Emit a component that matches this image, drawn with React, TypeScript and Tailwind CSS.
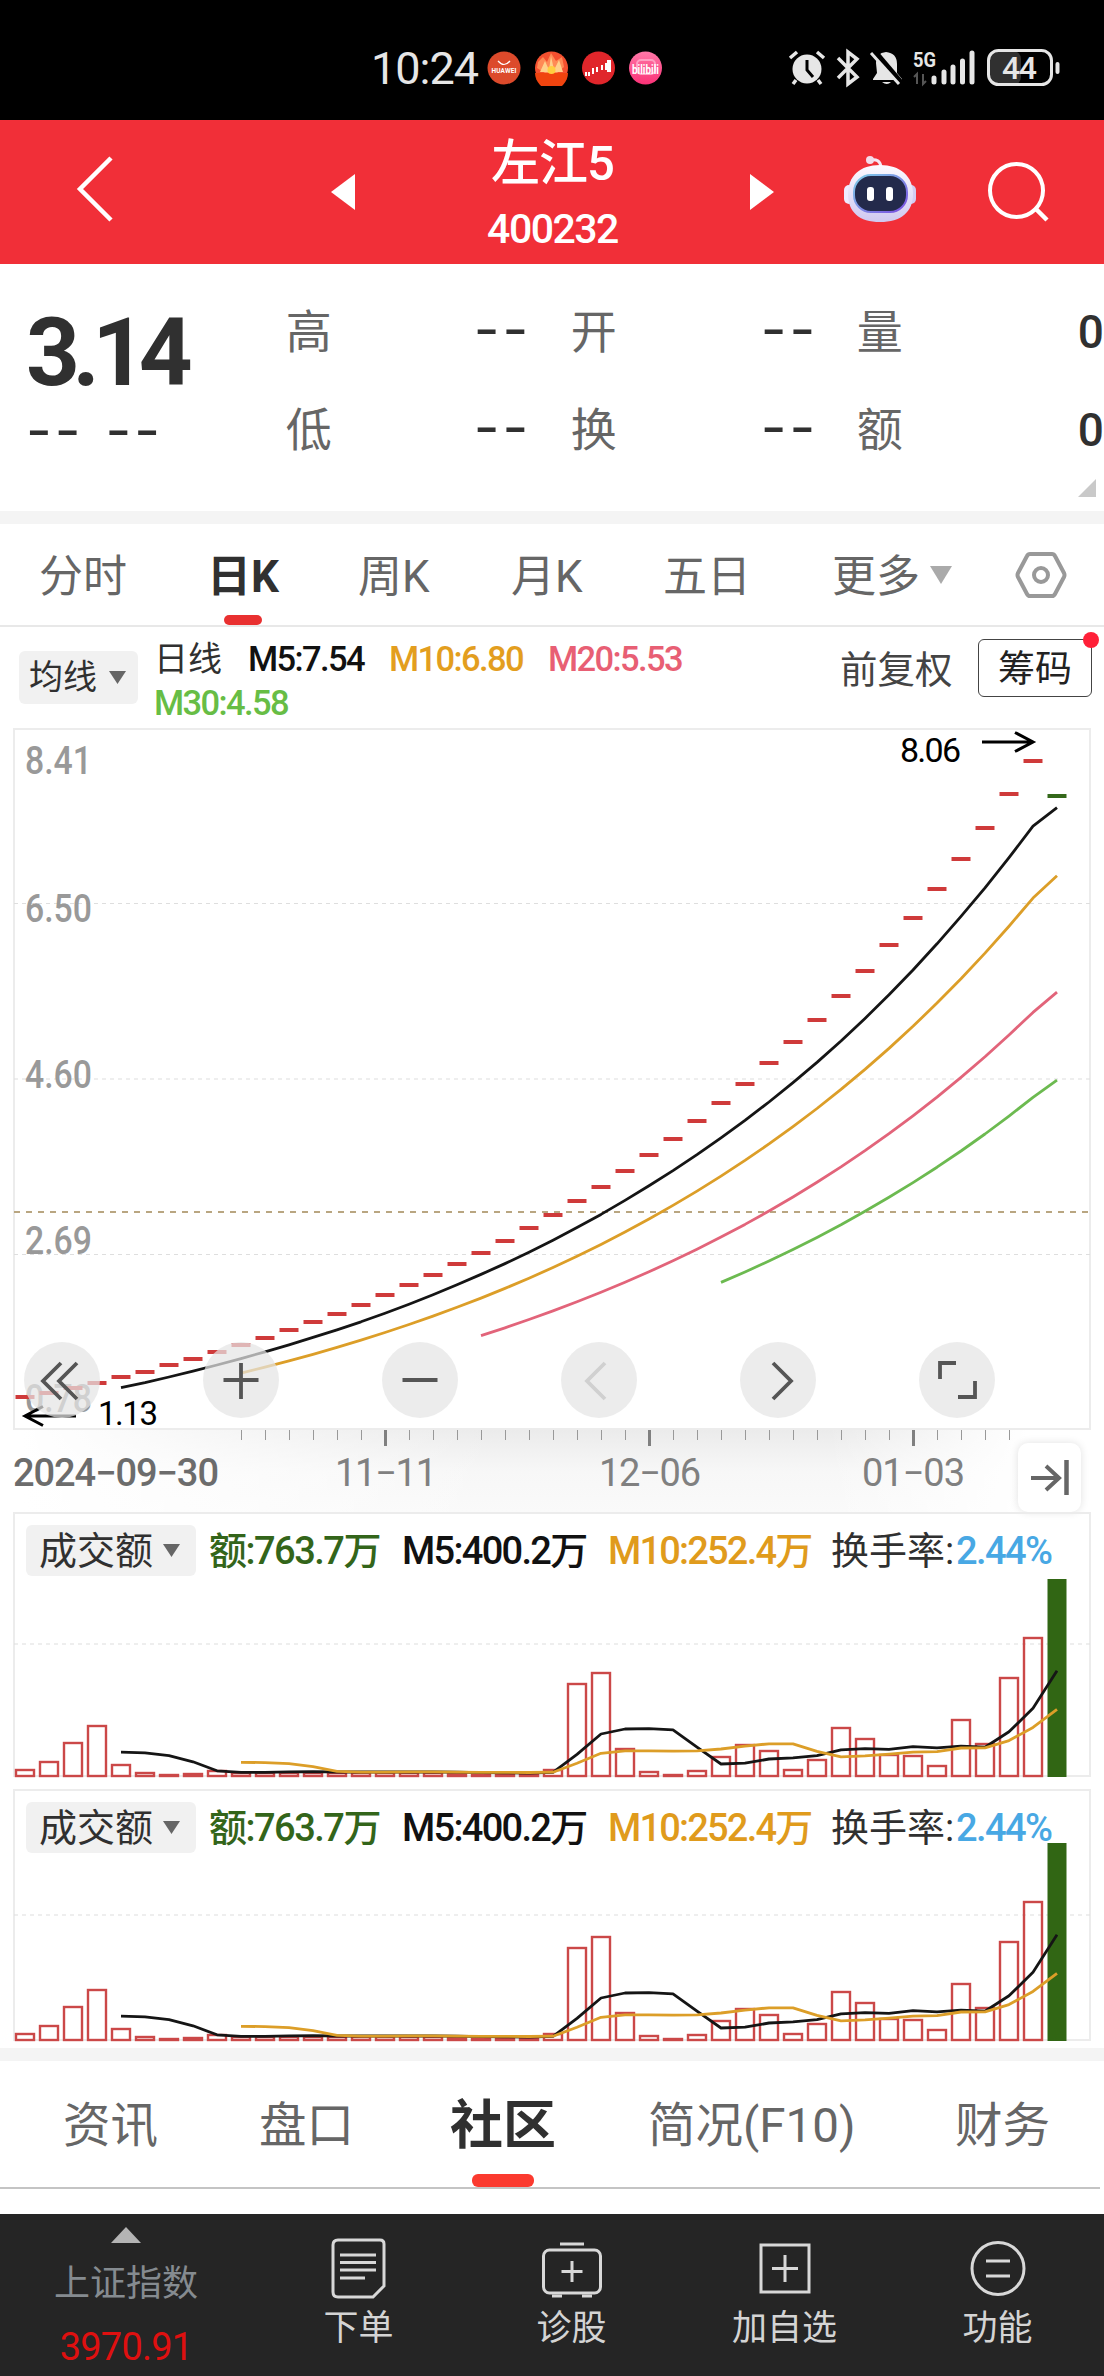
import React from "react";
import clsx from "clsx";

// price rows, one per trading day, as y positions inside the k-line panel
const closes = [
  1397, 1393, 1388, 1383, 1377, 1372, 1365, 1359, 1352, 1345, 1338, 1330, 1322, 1314, 1305,
  1295, 1285, 1275, 1264, 1253, 1241, 1228, 1215, 1201, 1187, 1171, 1155, 1139, 1121, 1103,
  1084, 1063, 1042, 1020, 996, 971, 945, 918, 889, 859, 828, 794, 761, 796,
];

const volumes = [
  7, 15, 34, 51, 12, 4, 1, 3, 6, 4, 4, 4, 4, 4, 4, 4, 4, 4, 3, 2, 3, 3, 7, 93, 104, 28, 5, 1, 6,
  20, 32, 26, 7, 17, 49, 38, 22, 21, 11, 57, 33, 99, 139, 198,
];

const xOf = (i: number) => 25 + i * 24;

const average = (data: number[], n: number, toY: (v: number) => number) =>
  data
    .map((_, i) => {
      if (i < n - 1) return "";
      const sum = data.slice(i - n + 1, i + 1).reduce((a, b) => a + b, 0);
      return `${xOf(i)},${toY(sum / n).toFixed(1)}`;
    })
    .filter(Boolean)
    .join(" ");

const same = (v: number) => v;

const StatusBar = () => (
  <div className="flex h-[120px] items-center bg-black pt-[16px] pl-[371px] text-[#e6e6e6]">
    <span className="w-[116px] text-[45px] leading-none tracking-[-1px]">10:24</span>
    <svg width="180" height="36" viewBox="487 50 180 36">
      <defs>
        <linearGradient id="pink" x1="0" y1="0" x2="0" y2="1">
          <stop offset="0" stopColor="#ff78a8" />
          <stop offset="1" stopColor="#fb3277" />
        </linearGradient>
      </defs>
      <circle cx="504" cy="68" r="16.5" fill="#dc4a2b" />
      <path d="M498 61q6 7 12 0" fill="none" stroke="#fff" strokeWidth="1.2" />
      <text x="491.500" y="72.5" fontSize="6.5" fontWeight="700" fill="#fff" textLength="25">HUAWEI</text>
      <circle cx="551.500" cy="68" r="16.500" fill="#f4502f" />
      <path d="M538 62l5-5 4 5 4-9 5 8 6-4 2 10-7 6h-12l-8-5z" fill="#ff8a55" />
      <path d="M540 72l5-11 4 9 2-14 3 14 5-10 4 12z" fill="#ffd08a" />
      <path d="M535 73h33a16.500 16.500 0 0 1-33 0z" fill="#f0440f" />
      <circle cx="551.500" cy="70" r="4" fill="#ffcf40" />
      <circle cx="598.500" cy="68" r="16.500" fill="#e0262b" />
      <path d="M586 72v4M589 72v4M593 68v6M597 67v5M602 65v5M606 63v7M610 61v10h-2v-10z" stroke="#fff" strokeWidth="2" fill="none" />
      <circle cx="645.500" cy="68" r="16.500" fill="url(#pink)" />
      <rect x="637" y="60" width="18" height="14" rx="4" fill="none" stroke="#ff9fc2" strokeWidth="2" />
      <text x="632" y="74" fontSize="13" fontWeight="700" fill="#fff" textLength="27" lengthAdjust="spacingAndGlyphs">bilibili</text>
    </svg>
    <svg className="ml-[113px]" width="290" height="44" viewBox="780 46 290 44" fill="none" stroke="#e6e6e6">
      <circle cx="807" cy="69" r="14.500" fill="#e6e6e6" stroke="none" />
      <path d="M790 58l7-6M824 58l-7-6M796 80l-3 4M818 80l3 4" strokeWidth="3.500" />
      <path d="M807 60v10l6 7" stroke="#000" strokeWidth="3" />
      <path d="M838 58l19 19-9 7V52l9 7-19 19" strokeWidth="3.500" />
      <path d="M876 63q0-10 10-11 11 1 11 12v9l5 6v1h-29v-1l4-6z" fill="#e6e6e6" stroke="none" />
      <path d="M882 82h9q-4 4-9 0z" fill="#e6e6e6" stroke="none" />
      <path d="M873 50l28 33" stroke="#000" strokeWidth="6" />
      <path d="M871 53l28 31" strokeWidth="3" />
      <text x="913" y="67" fontSize="21" fontWeight="700" fill="#e6e6e6" stroke="none" textLength="23" lengthAdjust="spacingAndGlyphs">5G</text>
      <path d="M917 84V74l-3 3M923 74v10l3-3" stroke="#555" strokeWidth="2" />
      <path d="M934 78v4M944 72v10M953 67v15M962.500 61v21M972 53v29" strokeWidth="5" strokeLinecap="round" />
      <rect x="989" y="51" width="32" height="34" rx="8" fill="#303030" stroke="none" />
      <rect x="988.500" y="50.500" width="63" height="34" rx="10" strokeWidth="3" />
      <path d="M1057.500 64v8" strokeWidth="4" strokeLinecap="round" />
      <text x="1002" y="79" fontSize="32" fontWeight="500" fill="#e6e6e6" stroke="none" textLength="35">44</text>
    </svg>
  </div>
);

const Robot = () => (
  <svg width="76" height="70" viewBox="842 154 76 70">
    <defs>
      <linearGradient id="shell" x1="0" y1="0" x2="0" y2="1">
        <stop offset="0" stopColor="#fdfaff" />
        <stop offset="1" stopColor="#cfc8f0" />
      </linearGradient>
      <linearGradient id="rim" x1="0" y1="0" x2="1" y2="1">
        <stop offset="0" stopColor="#7fd0e8" />
        <stop offset="1" stopColor="#7a4be0" />
      </linearGradient>
    </defs>
    <path d="M870 160q10-2 11 7" fill="none" stroke="#f6e6f4" strokeWidth="3" />
    <circle cx="870" cy="160" r="4" fill="#f3dcea" />
    <rect x="844" y="185" width="10" height="19" rx="5" fill="#efeaff" />
    <rect x="906" y="185" width="10" height="19" rx="5" fill="#d3cdf2" />
    <path d="M848 194c0-18 12-29 32-29s33 11 33 29-12 28-33 28-32-10-32-28z" fill="url(#shell)" />
    <rect x="854" y="175" width="53" height="37" rx="17" fill="#232a4b" stroke="url(#rim)" strokeWidth="2" />
    <rect x="867" y="187" width="7" height="14" rx="3" fill="#fff" />
    <rect x="886" y="187" width="7" height="14" rx="3" fill="#fff" />
  </svg>
);

const Header = () => (
  <header className="flex h-[144px] items-center bg-[#f12f38] text-white">
    <svg className="-mt-[6px] ml-[74px]" width="42" height="70" viewBox="0 0 42 70" fill="none" stroke="#fff" strokeWidth="4.500">
      <path d="M37 4L6 35l31 31" />
    </svg>
    <svg className="ml-[215px]" width="24" height="36" viewBox="0 0 24 36">
      <path d="M24 0v36L0 18z" fill="#fff" />
    </svg>
    <div className="flex w-[395px] flex-col items-center pt-[5px] font-medium">
      <h1 className="text-[49px] leading-[56px] tracking-[-1px]">左江5</h1>
      <span className="mt-[13px] text-[41px] leading-[48px] tracking-[-1.5px]">400232</span>
    </div>
    <svg width="24" height="36" viewBox="0 0 24 36">
      <path d="M0 0v36l24-18z" fill="#fff" />
    </svg>
    <div className="-mt-[6px] ml-[68px]">
      <Robot />
    </div>
    <svg className="ml-[68px]" width="64" height="64" viewBox="0 0 64 64" fill="none" stroke="#fff">
      <circle cx="30.500" cy="30.500" r="26.500" strokeWidth="4" />
      <path d="M50 49l11 11" strokeWidth="4.500" />
    </svg>
  </header>
);

const Dashes = ({ className }: { className?: string }) => (
  <span className={clsx("pb-[6px] font-[Inter] text-[56px] leading-[50px] tracking-[3px] text-[#303030]", className)}>--</span>
);

const quoteRows = [
  ["高", "开", "量"],
  ["低", "换", "额"],
];

const Quote = () => (
  <section className="relative flex h-[247px]">
    <div className="w-[288px] pl-[26px] pt-[42px] text-[#303030]">
      <div className="text-[94px] leading-[94px] font-bold tracking-[-7.500px]">3.14</div>
      <div className="flex h-[66px] items-center gap-[22px]">
        <Dashes />
        <Dashes />
      </div>
    </div>
    <div className="flex-1 pt-[19px]">
      {quoteRows.map((row) => (
        <div key={row[0]} className="flex h-[98px] items-center text-[46px] leading-none text-[#666]">
          <span className="w-[188px]">{row[0]}</span>
          <Dashes className="w-[97px]" />
          <span className="w-[190px]">{row[1]}</span>
          <Dashes className="w-[96px]" />
          <span className="w-[221px]">{row[2]}</span>
          <span className="font-medium text-[#303030]">0</span>
        </div>
      ))}
    </div>
    <svg className="absolute right-[8px] bottom-[14px]" width="18" height="18">
      <path d="M18 0v18H0z" fill="#c9c9c9" />
    </svg>
  </section>
);

const periods = [
  { label: "分时", width: "w-[168px]" },
  { label: "日K", width: "w-[151px]", active: true },
  { label: "周K", width: "w-[153px]" },
  { label: "月K", width: "w-[152px]" },
  { label: "五日", width: "w-[169px]" },
  { label: "更多", width: "w-[97px]" },
];

const PeriodTabs = () => (
  <nav className="flex h-[103px] items-center border-b-2 border-[#e8e8e8] pl-[39px] text-[44px] text-[#666]">
    {periods.map((p) => (
      <div key={p.label} className={clsx("relative flex h-full items-center pt-[5px] whitespace-nowrap", p.width, p.active && "font-bold text-[#303030]")}>
        {p.label}
        {p.active && <i className="absolute bottom-0 left-[17px] h-[10px] w-[38px] rounded-[5px] bg-[#e93030]" />}
      </div>
    ))}
    <svg width="24" height="18">
      <path d="M1 0h22L12 18z" fill="#aaa" />
    </svg>
    <svg className="ml-[62px]" width="52" height="50" viewBox="0 0 52 50" fill="none" stroke="#999" strokeWidth="4">
      <path d="M15 4h22q2 0 3 2l9 17q1 2 0 4l-9 17q-1 2-3 2H15q-2 0-3-2L3 27q-1-2 0-4l9-17q1-2 3-2z" />
      <circle cx="26" cy="25" r="7" />
    </svg>
  </nav>
);

const Caret = () => (
  <svg width="19" height="13">
    <path d="M1 0h17L9.500 13z" fill="#666" />
  </svg>
);

const AverageLegend = () => (
  <div className="flex h-[101px] whitespace-nowrap">
    <div className="mt-[24px] ml-[19px] flex h-[53px] w-[119px] items-center gap-[11px] rounded-[6px] bg-[#f1f1f1] pl-[10px] text-[34px] text-[#303030]">
      均线
      <Caret />
    </div>
    <div className="ml-[16px] w-[686px] pt-[10px] text-[34.500px] leading-[44px] font-medium tracking-[-1.6px]">
      <div className="flex">
        <span className="w-[94px] text-[34px] font-normal tracking-normal text-[#303030]">日线</span>
        <span className="w-[141px] text-[#111]">M5:7.54</span>
        <span className="w-[159px] text-[#e39e1e]">M10:6.80</span>
        <span className="text-[#e85f74]">M20:5.53</span>
      </div>
      <div className="text-[#67bd45]">M30:4.58</div>
    </div>
    <div className="mt-[20px] w-[138px] text-[37.500px] leading-[46px] text-[#444]">前复权</div>
    <div className="relative mt-[12px] flex h-[58px] w-[114px] items-center justify-center rounded-[6px] border border-[#444] pt-[3px] text-[37px] text-[#222]">
      筹码
      <i className="absolute -top-[8px] -right-[8px] size-[16px] rounded-full bg-[#ff2038]" />
    </div>
  </div>
);

const priceLabels: [string, number][] = [
  ["8.41", 774],
  ["6.50", 922],
  ["4.60", 1088],
  ["2.69", 1254],
  ["0.78", 1412],
];

const chartButtons = [
  { d: "M37 21L19 39l18 18M53 21L35 39l18 18", color: "#555" },
  { d: "M38 21v36M20.500 38h35", color: "#555" },
  { d: "M20.500 38h35", color: "#555" },
  { d: "M44 21L26 39l18 18", color: "#d0d0d0" },
  { d: "M33 21l18 18-18 18", color: "#555" },
  { d: "M21 37V21h16M56 39v16H39", color: "#555" },
];

const KLine = () => (
  <div className="relative h-[702px]">
    <svg className="block" width="1104" height="702" viewBox="0 728 1104 702" fill="none">
      <rect x="14" y="729" width="1076" height="700" stroke="#ececec" strokeWidth="2" />
      <path d="M14 903.500h1076M14 1079h1076M14 1254.500h1076" stroke="#dedede" strokeWidth="1.200" strokeDasharray="4 4" />
      <path d="M14 1212h1076" stroke="#b9a681" strokeWidth="2" strokeDasharray="6 6" />
      {priceLabels.map(([label, y]) => (
        <text key={label} x="25" y={y} fontSize="38" fontWeight="500" fill="#999" textLength="67" lengthAdjust="spacingAndGlyphs">
          {label}
        </text>
      ))}
      {closes.map((y, i) => (
        <path key={i} d={`M${xOf(i) - 9.500} ${y}h19`} stroke={i === 43 ? "#34681a" : "#cf3a3a"} strokeWidth="4" />
      ))}
      <g strokeWidth="2.800" strokeLinejoin="round">
        <polyline points={average(closes, 5, same)} stroke="#151515" />
        <polyline points={average(closes, 10, same)} stroke="#dc9e28" />
        <polyline points={average(closes, 20, same)} stroke="#e2647a" />
        <polyline points={average(closes, 30, same)} stroke="#6cba50" />
      </g>
      <g stroke="#000" strokeWidth="3">
        <path d="M982 742h50M1015 732.500l18 9.500-18 9.500" />
        <path d="M76 1416H26M43 1406.500l-18 9.500 18 9.500" />
      </g>
      <text x="900" y="761.500" fontSize="34" fill="#000" textLength="61">8.06</text>
      <text x="98" y="1425" fontSize="33" fill="#000" textLength="60">1.13</text>
    </svg>
    <div className="absolute bottom-[12px] left-[24px] flex gap-[103px]">
      {chartButtons.map((b, i) => (
        <button key={i} className="size-[76px] rounded-full bg-[#e5e5e5]/72">
          <svg width="76" height="76" fill="none" stroke={b.color} strokeWidth="3.800">
            <path d={b.d} />
          </svg>
        </button>
      ))}
    </div>
  </div>
);

const ticks = Array.from({ length: 33 }, (_, i) => i + 9);

const TimeAxis = () => (
  <div className="relative flex h-[82px] justify-between">
    <svg className="block" width="1104" height="82" viewBox="0 1430 1104 82">
      <defs>
        <linearGradient id="fadeY" x1="0" y1="0" x2="0" y2="1">
          <stop offset="0" stopColor="#ebebeb" />
          <stop offset="0.500" stopColor="#f7f7f7" />
          <stop offset="1" stopColor="#fafafa" />
        </linearGradient>
        <linearGradient id="fadeX">
          <stop offset="0.020" stopColor="#fff" />
          <stop offset="0.450" stopColor="#fff" stopOpacity="0" />
          <stop offset="0.750" stopColor="#fff" stopOpacity="0" />
          <stop offset="0.930" stopColor="#fff" />
        </linearGradient>
      </defs>
      <rect y="1430" width="1104" height="82" fill="url(#fadeY)" />
      <rect y="1430" width="1104" height="82" fill="url(#fadeX)" />
      {ticks.map((i) => {
        const major = i === 15 || i === 26 || i === 37;
        return (
          <path
            key={i}
            d={`M${xOf(i) + 0.500} 1430v${major ? 16 : 10}`}
            stroke={major ? "#808080" : "#999"}
            strokeWidth={major ? 3 : 1}
          />
        );
      })}
      <g fontSize="38" lengthAdjust="spacingAndGlyphs">
        <text x="13" y="1486" textLength="206" fontWeight="500" fill="#6c6c6c">2024−09−30</text>
        <text x="335" y="1486" textLength="102" fill="#808080">11−11</text>
        <text x="599" y="1486" textLength="102" fill="#808080">12−06</text>
        <text x="862" y="1486" textLength="103" fill="#808080">01−03</text>
      </g>
    </svg>
    <button className="absolute top-[13px] right-[23px] h-[69px] w-[63px] rounded-[10px] bg-white shadow-[0_0_8px_rgba(0,0,0,0.12)]">
      <svg width="63" height="69" fill="none" stroke="#666">
        <path d="M13 35h27M28 23l13 12-13 12" strokeWidth="4" />
        <path d="M48.500 17v35" strokeWidth="4.500" />
      </svg>
    </button>
  </div>
);

type VolumeProps = { height: number; base: number; grid: number };

const VolumePanel = ({ height, base, grid }: VolumeProps) => {
  const toY = (v: number) => base - 1 - v;
  return (
    <section className="relative ml-[13px] w-[1078px] border-2 border-[#ececec]" style={{ height }}>
      <div className="flex h-[73px] items-center text-[38px] leading-none font-medium whitespace-nowrap">
        <div className="ml-[11px] flex h-[51px] w-[170px] items-center gap-[9px] rounded-[6px] bg-[#f1f1f1] pl-[13px] text-[38px] font-normal text-[#303030]">
          成交额
          <Caret />
        </div>
        <span className="ml-[13px] w-[193px] tracking-[-1.5px] text-[#33651a]">额:763.7万</span>
        <span className="w-[206px] tracking-[-1.7px] text-[#111]">M5:400.2万</span>
        <span className="w-[223px] tracking-[-1.8px] text-[#e09b1c]">M10:252.4万</span>
        <span className="w-[125px] text-[38px] font-normal text-[#303030]">换手率:</span>
        <span className="tracking-[-1.6px] text-[#48a8e4]">2.44%</span>
      </div>
      {/* bars run up under the legend row */}
      <svg className="absolute -top-[2px] -left-[15px]" width="1104" height={base + 2} fill="none">
        <path d={`M14 ${grid}h1076`} stroke="#dedede" strokeWidth="1.200" strokeDasharray="4 4" />
        {volumes.map((v, i) =>
          i === 43 ? (
            <rect key={i} x={xOf(i) - 9.500} y={base - v} width="19" height={v} fill="#316614" />
          ) : (
            <rect
              key={i}
              x={xOf(i) - 9}
              y={base - Math.max(v, 2)}
              width="18"
              height={Math.max(v - 1, 1)}
              stroke="#cb4848"
              strokeWidth="2.400"
            />
          )
        )}
        <g strokeWidth="2.800" strokeLinejoin="round">
          <polyline points={average(volumes, 5, toY)} stroke="#151515" />
          <polyline points={average(volumes, 10, toY)} stroke="#dc9e28" />
        </g>
      </svg>
    </section>
  );
};

const infoTabs = [
  { label: "资讯", width: "w-[196px]" },
  { label: "盘口", width: "w-[191px]" },
  { label: "社区", width: "w-[198px]", active: true },
  { label: "简况(F10)", width: "w-[307px]" },
  { label: "财务", width: "" },
];

const InfoTabs = () => (
  <nav className="mr-[4px] flex h-[128px] items-center border-b-2 border-[#c4c4c4] pl-[63px] text-[47.500px] text-[#666]">
    {infoTabs.map((t) => (
      <div
        key={t.label}
        className={clsx("relative flex h-full items-center pt-[6px] whitespace-nowrap", t.width, t.active && "text-[53px] font-bold text-[#303030]")}
      >
        {t.label}
        {t.active && <i className="absolute bottom-0 left-[22px] h-[13px] w-[62px] rounded-[6px] bg-[#fb3a2f]" />}
      </div>
    ))}
  </nav>
);

const actions = [
  {
    label: "下单",
    icon: (
      <>
        <path d="M9 3h42q4 0 4 4v42L44 60H9q-5 0-5-5V8q0-5 5-5z" />
        <path d="M11 18h36M11 25.500h36M11 33h36M11 41h25" />
      </>
    ),
  },
  {
    label: "诊股",
    icon: (
      <>
        <path d="M18 7h24" />
        <rect x="1.500" y="13" width="57" height="43" rx="6" />
        <path d="M30 24v21M19.500 34.500h21M10 59h10M40 59h10" />
      </>
    ),
  },
  {
    label: "加自选",
    icon: (
      <>
        <rect x="6" y="8" width="48" height="47" />
        <path d="M30 18v27M17 31.500h26" />
      </>
    ),
  },
  {
    label: "功能",
    icon: (
      <>
        <circle cx="30" cy="31.500" r="26" />
        <path d="M18 24h24M18 39h24" />
      </>
    ),
  },
];

const BottomBar = () => (
  <footer className="flex h-[162px] bg-[#252525]">
    <div className="flex w-[254px] flex-col items-center pt-[13px]">
      <svg width="30" height="16">
        <path d="M15 0l15 16H0z" fill="#b4b4b4" />
      </svg>
      <span className="mt-[15px] text-[36px] leading-[52px] text-[#858b90]">上证指数</span>
      <span className="mt-[15px] text-[38px] leading-[44px] tracking-[-0.8px] text-[#df1010]">3970.91</span>
    </div>
    <div className="flex">
      {actions.map((a) => (
        <div key={a.label} className="flex w-[213px] flex-col items-center pt-[23px]">
          <svg width="60" height="64" fill="none" stroke="#d8d8d8" strokeWidth="3">
            {a.icon}
          </svg>
          <span className="mt-[5px] text-[35px] leading-[46px] text-[#d4d4d4]">{a.label}</span>
        </div>
      ))}
    </div>
  </footer>
);

const App = () => (
  <div className="h-[2376px] w-[1104px] overflow-hidden bg-white font-['Roboto','Noto_Sans_CJK_SC',sans-serif]">
    <StatusBar />
    <Header />
    <Quote />
    <div className="h-[13px] bg-[#f4f4f4]" />
    <PeriodTabs />
    <AverageLegend />
    <KLine />
    <TimeAxis />
    <VolumePanel height={265} base={265} grid={132} />
    <div className="h-[12px]" />
    <VolumePanel height={252} base={252} grid={126} />
    <div className="mt-[7px] h-[13px] bg-[#f4f4f4]" />
    <InfoTabs />
    <div className="h-[25px]" />
    <BottomBar />
  </div>
);

export default App;
